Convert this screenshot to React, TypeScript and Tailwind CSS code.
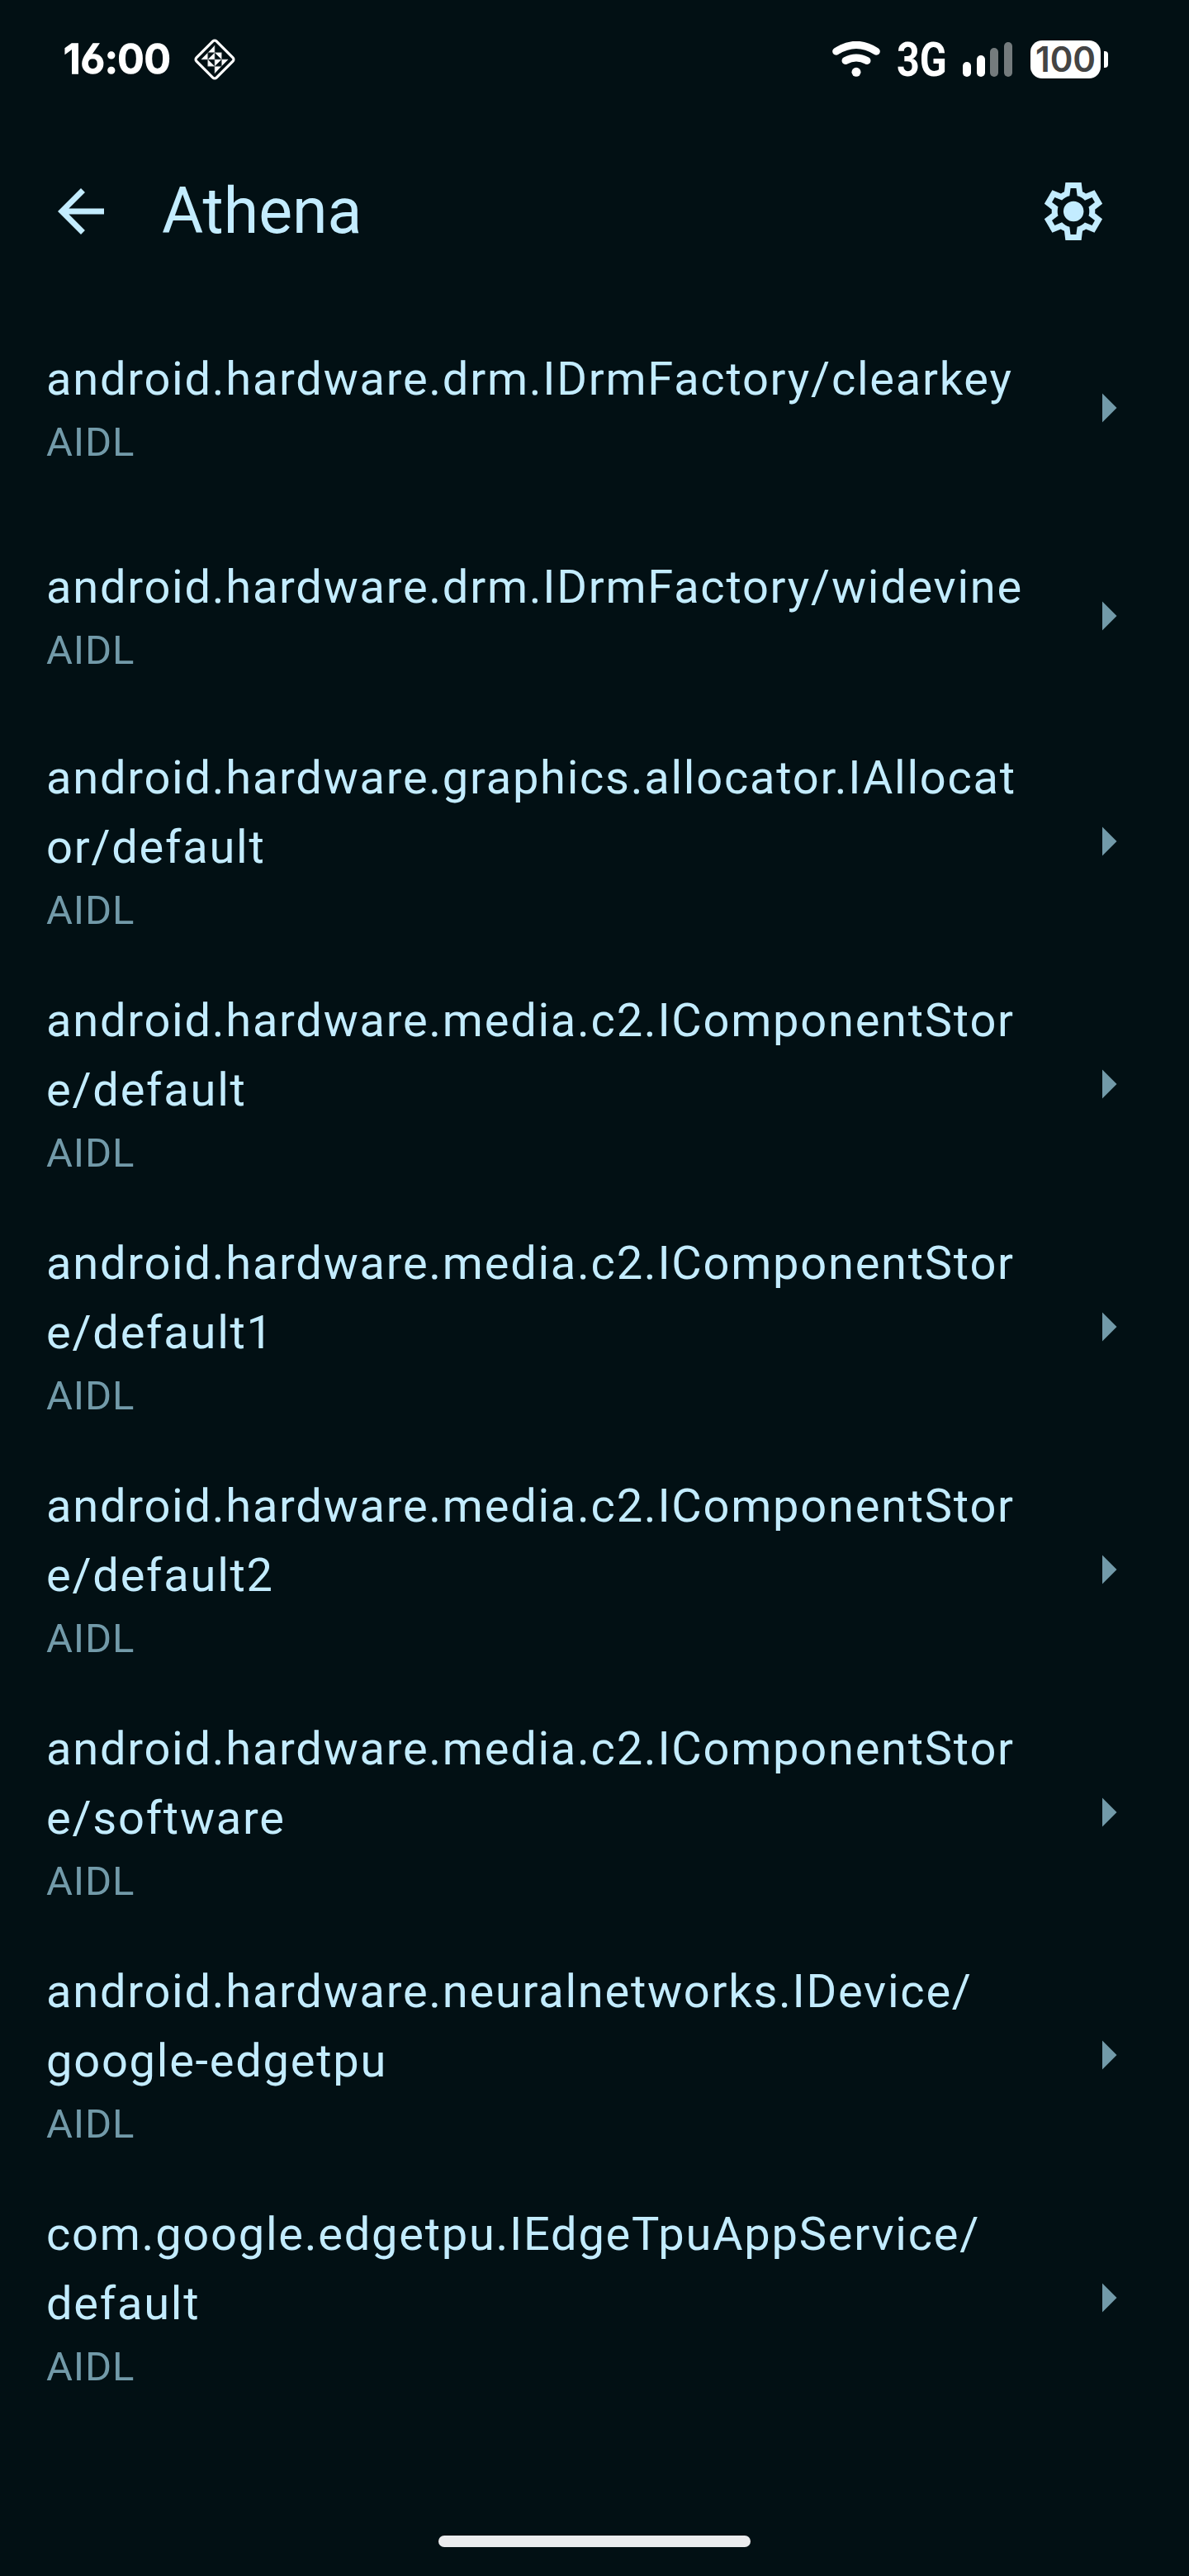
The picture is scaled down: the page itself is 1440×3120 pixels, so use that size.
const rows: { lines: string[] }[] = [
  { lines: ["android.hardware.drm.IDrmFactory/clearkey"] },
  { lines: ["android.hardware.drm.IDrmFactory/widevine"] },
  { lines: ["android.hardware.graphics.allocator.IAllocat", "or/default"] },
  { lines: ["android.hardware.media.c2.IComponentStor", "e/default"] },
  { lines: ["android.hardware.media.c2.IComponentStor", "e/default1"] },
  { lines: ["android.hardware.media.c2.IComponentStor", "e/default2"] },
  { lines: ["android.hardware.media.c2.IComponentStor", "e/software"] },
  { lines: ["android.hardware.neuralnetworks.IDevice/", "google-edgetpu"] },
  { lines: ["com.google.edgetpu.IEdgeTpuAppService/", "default"] },
];

function NotificationIcon() {
  return (
    <svg className="size-[50px]" viewBox="-25 -25 50 50" fill="#fff">
      <rect x="-17.1" y="-17.1" width="34.2" height="34.2" rx="3" transform="rotate(45)" fill="none" stroke="#fff" strokeWidth="3.2" />
      <path d="M0-17V-8.5H-8ZM-8.5-8V0H-16.5ZM0-8.3V0H-8.3ZM0-8.3H8.3V0ZM-8.3 0V8.3H0ZM0 0H8.3L0 8.3ZM8.5 0H16.5L8.5 8ZM0 8.5H8L0 17Z" />
      <path d="M-8.3-8.3H8.3V8.3H-8.3ZM0-17V17M-16 0H16" fill="none" stroke="#8a9092" strokeWidth="0.7" />
    </svg>
  );
}

function StatusBar() {
  return (
    <header className="flex h-[144px] shrink-0 items-center pl-[77px] pr-[98px] font-[Inter] font-semibold text-white">
      <span className="w-[158px] pb-[2px] text-[49px] leading-none tracking-[-0.2px] [-webkit-text-stroke:1.5px_#fff] [font-feature-settings:'ss01','cv03']">16:00</span>
      <NotificationIcon />
      <div className="ml-auto flex items-center">
        <svg className="h-[44px] w-[58px]" viewBox="0 0 58 44" fill="none" stroke="#fff" strokeLinecap="round">
          <path d="M4.7 12.2Q29-3.5 53.3 12.2" strokeWidth="9" />
          <path d="M16 23.5Q29 16.5 42 23.5" strokeWidth="9" />
          <circle cx="29" cy="37.3" r="5.5" fill="#fff" stroke="none" />
        </svg>
        <span className="ml-[20px] w-[60px] origin-left scale-x-[0.85] whitespace-nowrap font-[Roboto] text-[57px] font-bold leading-none">3G</span>
        <div className="ml-[20px] flex h-[42px] items-end gap-[6.7px]">
          <i className="h-[18px] w-[10px] rounded-full bg-white" />
          <i className="h-[26px] w-[10px] rounded-full bg-white" />
          <i className="h-[35px] w-[10px] rounded-full bg-[#747b7d]" />
          <i className="h-[42px] w-[10px] rounded-full bg-[#747b7d]" />
        </div>
        <div className="ml-[22px] flex h-[46px] w-[85px] items-center justify-center rounded-[14px] bg-white pb-[1px] text-[42px] leading-none text-[#444]">100</div>
        <i className="ml-[4px] h-[20px] w-[5px] rounded-r-[4px] bg-white" />
      </div>
    </header>
  );
}

export default function App() {
  return (
    <div className="flex h-[3120px] w-[1440px] flex-col overflow-hidden bg-[#021014] font-[Roboto] text-[#c3ecff]">
      <StatusBar />
      <div className="flex h-[224px] shrink-0 items-center pl-14 pr-[98px]">
        <svg className="size-[84px]" viewBox="0 0 24 24" fill="currentColor">
          <path d="M20 11H7.83l5.59-5.59L12 4l-8 8 8 8 1.41-1.41L7.83 13H20v-2z" />
        </svg>
        <h1 className="ml-14 text-[77px] leading-[98px]">Athena</h1>
        <svg className="ml-auto size-[84px]" viewBox="0 0 24 24" fill="currentColor">
          <path d="m9.25 22-.4-3.2q-.325-.125-.612-.3t-.563-.375L4.7 19.375l-2.75-4.75 2.575-1.95Q4.5 12.5 4.5 12.337v-.675q0-.162.025-.337L1.95 9.375l2.75-4.75 2.975 1.25q.275-.2.575-.375t.6-.3l.4-3.2h5.5l.4 3.2q.325.125.613.3t.562.375l2.975-1.25 2.75 4.75-2.575 1.95q.025.175.025.338v.674q0 .163-.05.338l2.575 1.95-2.75 4.75-2.95-1.25q-.275.2-.575.375t-.6.3l-.4 3.2zM11 20h1.975l.35-2.65q.775-.2 1.438-.587t1.212-.938l2.475 1.025.975-1.7-2.15-1.625q.125-.35.175-.737T17.5 12t-.05-.787-.175-.738l2.15-1.625-.975-1.7-2.475 1.05q-.55-.575-1.212-.962t-1.438-.588L13 4h-1.975l-.35 2.65q-.775.2-1.437.588t-1.213.937L5.55 7.15l-.975 1.7 2.15 1.6q-.125.375-.175.75t-.05.8q0 .4.05.775t.175.75l-2.15 1.625.975 1.7 2.475-1.05q.55.575 1.213.963t1.437.587zM12.05 15.5q1.45 0 2.475-1.025T15.55 12t-1.025-2.475T12.05 8.5q-1.475 0-2.488 1.025T8.55 12t1.013 2.475T12.05 15.5" />
        </svg>
      </div>
      <ul className="flex flex-col">
        {rows.map((row) => (
          <li key={row.lines.join("")} className="flex min-h-[252px] items-center py-7 pl-14 pr-14">
            <div className="flex-1">
              {row.lines.map((line) => (
                <p key={line} className="whitespace-nowrap text-[56px] leading-[84px] tracking-[1.75px]">{line}</p>
              ))}
              <p className="text-[49px] leading-[70px] tracking-[0.875px] text-[#729aa9]">AIDL</p>
            </div>
            <svg className="size-[84px] text-[#729aa9]" viewBox="0 0 24 24" fill="currentColor">
              <path d="M10 17l5-5-5-5z" />
            </svg>
          </li>
        ))}
      </ul>
      <div className="mx-auto mb-[35px] mt-auto h-[14px] w-[378px] rounded-full bg-[#ebecee]" />
    </div>
  );
}
